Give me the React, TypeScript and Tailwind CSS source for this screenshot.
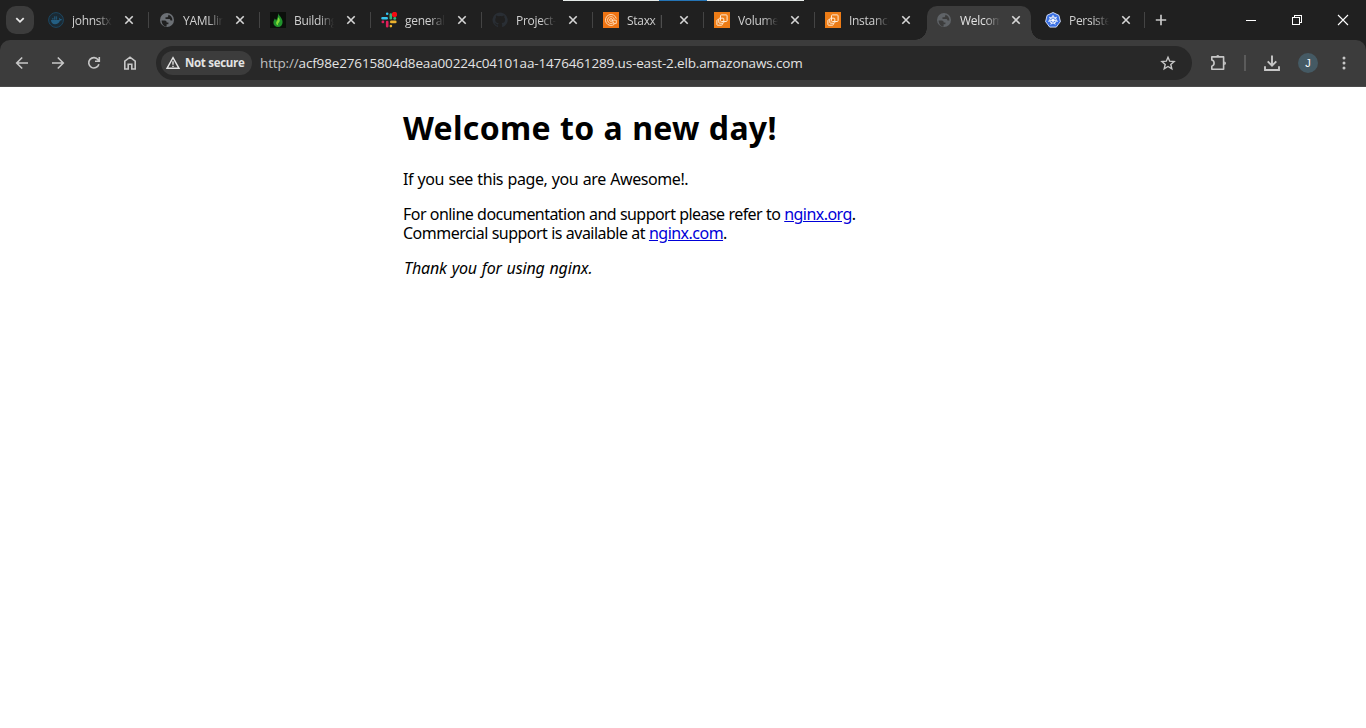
import type { ReactNode } from "react";

type IconProps = { children: ReactNode; size?: number; className?: string; stroke?: number };

function Icon({ children, size = 16, className = "", stroke = 1.6 }: IconProps) {
  return (
    <svg
      width={size}
      height={size}
      viewBox={`0 0 ${size} ${size}`}
      fill="none"
      stroke="currentColor"
      strokeWidth={stroke}
      className={`shrink-0 ${className}`}
    >
      {children}
    </svg>
  );
}

function DockerIcon() {
  return (
    <Icon stroke={1}>
      <circle cx="8" cy="8" r="7.4" stroke="#1c4660" fill="#1b2a34" />
      <path d="M3 8h8.2c.3-.9.1-1.6-.3-2.1.7 0 1.200.5 1.400 1.200.7-.1 1.300.1 1.600.4-.4.9-1.100 1.100-1.900 1.100C11.200 11.200 9.400 12.300 7 12.300 4.500 12.300 3 10.600 3 8z" fill="#245f83" stroke="none" />
      <path d="M4.200 6.200h1.300v1.300H4.200zM6 6.200h1.300v1.300H6zM7.800 6.200h1.300v1.300H7.800zM6 4.500h1.300v1.200H6zM7.800 4.500h1.300v1.200H7.800z" fill="#245f83" stroke="none" />
    </Icon>
  );
}

function GlobeIcon({ active = false }: { active?: boolean }) {
  const ink = active ? "#3c3c3c" : "#202020";
  return (
    <Icon stroke={0}>
      <circle cx="8" cy="8" r="7" fill={active ? "#5f6367" : "#6c7075"} />
      <path d="M2.600 8.400h3.200c1.200 0 1.900.9 1.900 2h1.700v1.900H7.600v2.200C4.600 14.200 2.600 11.600 2.600 8.400z" fill={ink} />
      <path d="M9.300 2.700v1c0 .9-.6 1.500-1.500 1.500H6.500v1.700h3.600c.9 0 1.400.6 1.400 1.500h1.900c0-2.800-1.500-5-4.100-5.700z" fill={ink} />
    </Icon>
  );
}

function FlameIcon() {
  return (
    <Icon stroke={0}>
      <rect width="16" height="16" fill="#0b0f0b" />
      <path d="M8 1c.5 2.600 4.600 4.700 4.600 9 0 3-1.900 5-4.600 5-2.500 0-4.600-1.700-4.600-4.300 0-1.900 1-2.800 1.300-4.200.9.5 1.200 1.200 1.300 2C7.300 6.700 8.400 4 8 1z" fill="#20932c" />
      <path d="M8 5c2.200 2.200 2.500 4 .5 6.100-.7.8-.7 1.600-.1 2.300-2-.3-3-2.200-1.800-3.900C7.700 8 8.400 6.700 8 5z" fill="#82d936" />
    </Icon>
  );
}

function SlackIcon() {
  return (
    <Icon stroke={2.6}>
      <g strokeLinecap="round">
        <path d="M1.500 6.300h4.200M6.200 1.700v.1" stroke="#36c5f0" />
        <path d="M9.800 2.500v3.800" stroke="#2eb67d" />
        <path d="M10.300 9.900h4M9.900 14v.1" stroke="#ecb22e" />
        <path d="M6.200 10v4.300M1.800 9.900h.2" stroke="#e01e5a" />
        <path d="M13.600 6.400h.3" stroke="#2eb67d" />
      </g>
      <circle cx="13.500" cy="2.500" r="2.700" fill="#f10b12" stroke="none" />
    </Icon>
  );
}

function GithubIcon() {
  return (
    <Icon stroke={0}>
      <path
        fill="#292e34"
        d="M8 .5a7.500 7.500 0 0 0-2.400 14.600c.4.1.5-.2.500-.4v-1.400c-2.100.5-2.500-.9-2.500-.9-.3-.9-.8-1.100-.8-1.100-.7-.5.1-.5.1-.5.700.1 1.100.8 1.100.8.700 1.200 1.800.8 2.200.6.1-.5.300-.8.500-1-1.700-.2-3.400-.8-3.400-3.700 0-.8.300-1.500.8-2-.1-.2-.3-1 .1-2 0 0 .6-.2 2.100.8a7.200 7.200 0 0 1 3.800 0c1.400-1 2.100-.8 2.100-.8.400 1 .1 1.800.1 2 .5.5.8 1.200.8 2 0 2.900-1.800 3.500-3.500 3.700.3.200.5.700.5 1.400v2.100c0 .2.100.5.500.4A7.500 7.500 0 0 0 8 .5z"
      />
    </Icon>
  );
}

function StaxxIcon() {
  return (
    <Icon stroke={0.9}>
      <rect width="16" height="16" fill="#ee7413" stroke="none" />
      <g stroke="#ffe2c4">
        <path d="M11.500 12.200A5.500 5.500 0 1 1 13.300 6.600" />
        <path d="M10.600 10.200A3.400 3.400 0 1 1 11.300 7.400" />
        <circle cx="8" cy="8" r="1.400" />
        <path d="M9.400 8.200h3.900v3.200h-2.800z" />
      </g>
    </Icon>
  );
}

function Ec2Icon() {
  return (
    <Icon stroke={1}>
      <rect width="16" height="16" fill="#ed7c16" stroke="none" />
      <g stroke="#ffebd4" strokeLinejoin="round">
        <rect x="6.500" y="2.900" width="6.600" height="6.600" rx=".9" />
        <rect x="4.800" y="6.200" width="5" height="5" rx=".8" />
        <path d="M4.700 7.800H3.500a.6.600 0 0 0-.6.600v4.200c0 .4.200.6.600.6h4.200c.4 0 .6-.2.600-.6v-1.300" />
      </g>
    </Icon>
  );
}

function KubernetesIcon() {
  return (
    <Icon stroke={0.9}>
      <path d="M8 .5l5.900 2.800 1.500 6.300-4.100 5.500H4.700L.6 9.600l1.500-6.300z" fill="#3970e4" stroke="#dce7ff" strokeLinejoin="round" />
      <g stroke="#fff">
        <circle cx="8" cy="8.100" r="3.300" />
        <path d="M8 3v3.800M8 8.100l3.900-3.100M8 8.100l4.900 1.200M8 8.100l2.200 4.500M8 8.100l-2.200 4.500M8 8.100l-4.900 1.200M8 8.100L4.100 5" />
      </g>
      <circle cx="8" cy="8.100" r="1" fill="#fff" stroke="none" />
    </Icon>
  );
}

type TabData = { title: string; icon: ReactNode; active?: boolean; divider?: boolean };

const tabs: TabData[] = [
  { title: "johnstx/", icon: <DockerIcon />, divider: true },
  { title: "YAMLlint", icon: <GlobeIcon />, divider: true },
  { title: "Building", icon: <FlameIcon />, divider: true },
  { title: "general (", icon: <SlackIcon />, divider: true },
  { title: "Project-1", icon: <GithubIcon />, divider: true },
  { title: "Staxx | Cl", icon: <StaxxIcon />, divider: true },
  { title: "Volumes", icon: <Ec2Icon />, divider: true },
  { title: "Instances", icon: <Ec2Icon /> },
  { title: "Welcome", icon: <GlobeIcon active />, active: true },
  { title: "Persisten", icon: <KubernetesIcon />, divider: true },
];

function Tab({ title, icon, active, divider }: TabData) {
  return (
    <div className="group relative flex h-full w-[111px] shrink-0 pt-1.5 last:-ml-[2px] last:w-[110px]">
      {active && (
        <div className="absolute top-1.5 left-px h-[34px] w-[104px] rounded-t-[10px] bg-[#3c3c3c]">
          <span className="absolute bottom-0 -left-3 h-3 w-3 bg-[radial-gradient(circle_at_0_0,transparent_11.5px,#3c3c3c_12px)]" />
          <span className="absolute -right-3 bottom-0 h-3 w-3 bg-[radial-gradient(circle_at_100%_0,transparent_11.5px,#3c3c3c_12px)]" />
        </div>
      )}
      <div className="relative flex h-7 w-full items-center pl-2.5">
        {icon}
        <span
          className={`ml-2 w-10 overflow-hidden pt-px text-[12px] leading-4 tracking-[-0.3px] [word-spacing:-0.5px] whitespace-nowrap [mask-image:linear-gradient(to_right,black_62%,transparent)] ${active ? "text-[#e3e3e3]" : "text-[#d0d0d0]"}`}
        >
          {title}
        </span>
        <Icon className={`text-[#d6d6d6] ${active ? "ml-2" : "ml-[9px]"}`}>
          <path d="M4.300 4.300l7.400 7.400M11.700 4.300l-7.400 7.400" />
        </Icon>
        {divider && <span className="ml-auto h-4 w-[1.5px] bg-[#444444]" />}
      </div>
    </div>
  );
}

function IconButton({ children, label }: { children: ReactNode; label: string }) {
  return (
    <button aria-label={label} className="flex h-[34px] w-9 shrink-0 items-center justify-center text-[#c7c7c7]">
      {children}
    </button>
  );
}

function TabStrip() {
  return (
    <div className="relative flex h-10 bg-[#202020]">
      <div className="absolute top-0 left-[563px] flex h-px w-[241px]">
        <span className="w-24 bg-[#e7ecea]" />
        <span className="w-12 bg-[#2474b5]" />
        <span className="flex-1 bg-[#e7ecea]" />
      </div>
      <button aria-label="Search tabs" className="mt-1.5 ml-1.5 flex h-7 w-7 shrink-0 items-center justify-center rounded-[10px] bg-[#3c3c3c] text-[#e8e8e8]">
        <Icon stroke={1.8}>
          <path d="M4.300 6.100L8 9.800l3.700-3.700" />
        </Icon>
      </button>
      <div className="ml-1 flex">
        {tabs.map((tab, i) => (
          <Tab key={i} {...tab} />
        ))}
      </div>
      <button aria-label="New tab" className="mt-1.5 ml-0.5 flex h-7 w-7 items-center justify-center text-[#c7c7c7]">
        <Icon stroke={1.7}>
          <path d="M8 2.800v10.400M2.800 8h10.400" />
        </Icon>
      </button>
      <div className="ml-auto flex text-white">
        <span className="flex h-10 w-[46px] items-center justify-center">
          <Icon stroke={1} className="[shape-rendering:crispEdges]"><path d="M3 8.500h10" /></Icon>
        </span>
        <span className="flex h-10 w-[46px] items-center justify-center">
          <Icon stroke={1} className="[shape-rendering:crispEdges]"><path d="M3.500 5.500h7v7h-7zM5.500 5.500v-2h7v7h-2" /></Icon>
        </span>
        <span className="flex h-10 w-[46px] items-center justify-center">
          <Icon stroke={1.1}><path d="M3 3l10 10M13 3L3 13" /></Icon>
        </span>
      </div>
    </div>
  );
}

function Toolbar() {
  return (
    <div className="bg-[#202020]">
      <div className="flex h-[47px] items-start rounded-t-[10px] border-b border-[#4a4a4a] bg-[#3c3c3c] pt-1.5 pl-1">
        <IconButton label="Back">
          <Icon><path d="M14 8H3M8.200 2.500L2.700 8l5.500 5.500" /></Icon>
        </IconButton>
        <IconButton label="Forward">
          <Icon><path d="M2 8h11M7.800 2.500L13.300 8l-5.500 5.500" /></Icon>
        </IconButton>
        <IconButton label="Reload">
          <Icon><path d="M12.900 9.300A5.200 5.200 0 1 1 12.100 4.700L13.200 6M13.300 2v4.300H9" /></Icon>
        </IconButton>
        <IconButton label="Home">
          <Icon><path d="M2.800 14V6.200L8 2.200l5.200 4V14H9.800V9.200H6.200V14z" /></Icon>
        </IconButton>
        <div className="ml-2 flex h-[34px] w-[1036px] items-center rounded-full bg-[#282828] pr-4 pl-[5px]">
          <div className="flex h-6 w-[91px] items-center rounded-full bg-[#3c3c3c] pl-1 text-[#e3e3e3]">
            <Icon stroke={1.4}><path d="M8 2.700L14 13.300H2zM8 6.300v3.500M8 10.700v1.300" /></Icon>
            <span className="ml-1 text-[11.5px] leading-4 font-bold tracking-[-0.3px] whitespace-nowrap">Not secure</span>
          </div>
          <span className="ml-2 text-[13.5px] leading-5 tracking-[-0.15px] whitespace-nowrap text-[#e3e3e3]">
            <span className="text-[#c0c0c0]">http://</span>acf98e27615804d8eaa00224c04101aa-1476461289.us-east-2.elb.amazonaws.com
          </span>
          <Icon stroke={1.4} className="ml-auto text-[#c7c7c7]">
            <path d="M8 2.300l1.700 3.900 4.400.4-3.300 2.900 1 4.300L8 11.500l-3.800 2.300 1-4.300-3.300-2.900 4.400-.4z" />
          </Icon>
        </div>
        <div className="ml-2 flex items-center">
          <IconButton label="Extensions">
            <Icon size={18} stroke={1.600}>
              <path d="M2.800 2.900H14.600V15.300H2.800V12.200c1.700-.5 2.300-1.600 2.300-3.100s-.6-2.500-2.300-3z" strokeLinejoin="round" />
              <path d="M7.200 2.500a1.600 1.600 0 0 1 3.200 0zM15.200 7.400a1.800 1.800 0 0 1 0 3.600z" fill="currentColor" stroke="none" />
            </Icon>
          </IconButton>
          <span className="ml-2 h-4 w-0.5 bg-[#5b5b5b]" />
          <span className="ml-2" />
          <IconButton label="Downloads">
            <Icon size={18} stroke={1.900}><path d="M9 1.500v10M4.700 7.300L9 11.600l4.300-4.300M2 12.300v3.700h14v-3.700" /></Icon>
          </IconButton>
          <IconButton label="Profile">
            <span className="flex h-5 w-5 items-center justify-center rounded-full bg-[#455a64] font-['Liberation_Sans'] text-[11px] leading-none text-white">J</span>
          </IconButton>
          <IconButton label="Menu">
            <Icon stroke={0}>
              <g fill="currentColor"><circle cx="8" cy="2.900" r="1.500" /><circle cx="8" cy="8" r="1.500" /><circle cx="8" cy="13.100" r="1.500" /></g>
            </Icon>
          </IconButton>
        </div>
      </div>
    </div>
  );
}

export default function App() {
  return (
    <div className="h-[728px] w-[1366px] overflow-hidden bg-white font-['Open_Sans','Noto_Sans',sans-serif]">
      <TabStrip />
      <Toolbar />
      <main className="mx-auto w-[560px] pt-[21px] font-['Noto_Sans',sans-serif] text-[16px] leading-[19px] text-black">
        <h1 className="text-[32px] leading-[39px] font-bold tracking-[0.3px] [word-spacing:0.5px] whitespace-nowrap">Welcome to a new day!</h1>
        <p className="mt-[23px] tracking-[-0.42px] [word-spacing:0.7px]">If you see this page, you are Awesome!.</p>
        <p className="mt-4 tracking-[-0.55px] [word-spacing:0.25px] whitespace-nowrap">
          For online documentation and support please refer to <a className="text-[#0000d8] underline">nginx.org</a>.
          <br />
          <span className="tracking-[-0.52px]">
            Commercial support is available at <a className="text-[#0000d8] underline">nginx.com</a>.
          </span>
        </p>
        <p className="mt-4 pl-px tracking-[-0.13px] [word-spacing:0.7px] italic">Thank you for using nginx.</p>
      </main>
    </div>
  );
}
